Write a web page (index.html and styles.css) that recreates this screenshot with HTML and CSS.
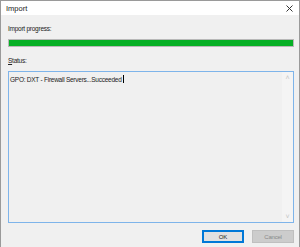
FILE: index.html
```html
<!DOCTYPE html>
<html lang="en">
<head>
    <meta charset="UTF-8">
    <title>Import</title>
    <link rel="stylesheet" href="styles.css">
</head>
<body>
    <div class="window">
        <div class="titlebar">
            <span class="title">Import</span>
            <span class="close-btn">
                <svg width="7" height="7" viewBox="0 0 7 7"><path d="M0.5 0.5L6.5 6.5M6.5 0.5L0.5 6.5" stroke="#333" stroke-width="1"/></svg>
            </span>
        </div>
        <div class="content">
            <p class="label">Import progress:</p>
            <div class="progress"><div class="progress-fill"></div></div>
            <p class="label status-label"><u>S</u>tatus:</p>
            <div class="status-box">
                <div class="status-text">GPO: DXT - Firewall Servers...Succeeded<span class="caret"></span></div>
                <div class="scrollbar">
                    <span class="arrow">&#708;</span>
                    <span class="arrow">&#709;</span>
                </div>
            </div>
            <div class="buttons">
                <button class="btn btn-default">OK</button>
                <button class="btn" disabled>Cancel</button>
            </div>
        </div>
    </div>
</body>
</html>
```
FILE: styles.css
```css
body { margin: 0; font-family: "Liberation Sans", Arial, sans-serif; font-size: 6.5px; letter-spacing: -0.25px; color: #000; background: #f0f0f0; }
.window { height: 246px; border: 1px solid #9a9a9a; border-bottom: none; background: #f0f0f0; }
.titlebar { height: 14px; background: #fff; display: flex; align-items: center; justify-content: space-between; padding: 0 6px 0 5px; }
.title { font-size: 7.5px; letter-spacing: 0; color: #222; }
.close-btn { display: flex; }
.content { padding: 9px 5px 0 7px; }
.label { margin: 0; line-height: 9px; color: #222; }
.progress { margin-top: 6px; height: 6px; border: 1px solid #b8b8b8; background: #e6e6e6; }
.progress-fill { height: 100%; width: 100%; background: #06b025; }
.status-label { margin-top: 9px; }
.status-box { margin-top: 6px; height: 150px; border: 1px solid #7eb4ea; display: flex; }
.status-text { flex: 1; padding: 3px 1px; line-height: 9px; color: #222; }
.caret { display: inline-block; width: 1px; height: 8px; background: #000; vertical-align: -1px; margin-left: 1px; }
.scrollbar { width: 11px; background: #f4f4f4; display: flex; flex-direction: column; justify-content: space-between; align-items: center; padding: 2px 0; }
.arrow { color: #c4c4c4; font-size: 7px; line-height: 7px; }
.buttons { display: flex; justify-content: flex-end; gap: 8px; margin-top: 7px; }
.btn { width: 42px; height: 13px; padding: 0; font-family: inherit; font-size: 6px; letter-spacing: -0.2px; background: #e1e1e1; border: 1px solid #adadad; color: #222; }
.btn-default { border-color: #0078d7; box-shadow: inset 0 0 0 1px #0078d7; }
.btn:disabled { background: #cccccc; border-color: #bfbfbf; color: #8a8a8a; }
```
